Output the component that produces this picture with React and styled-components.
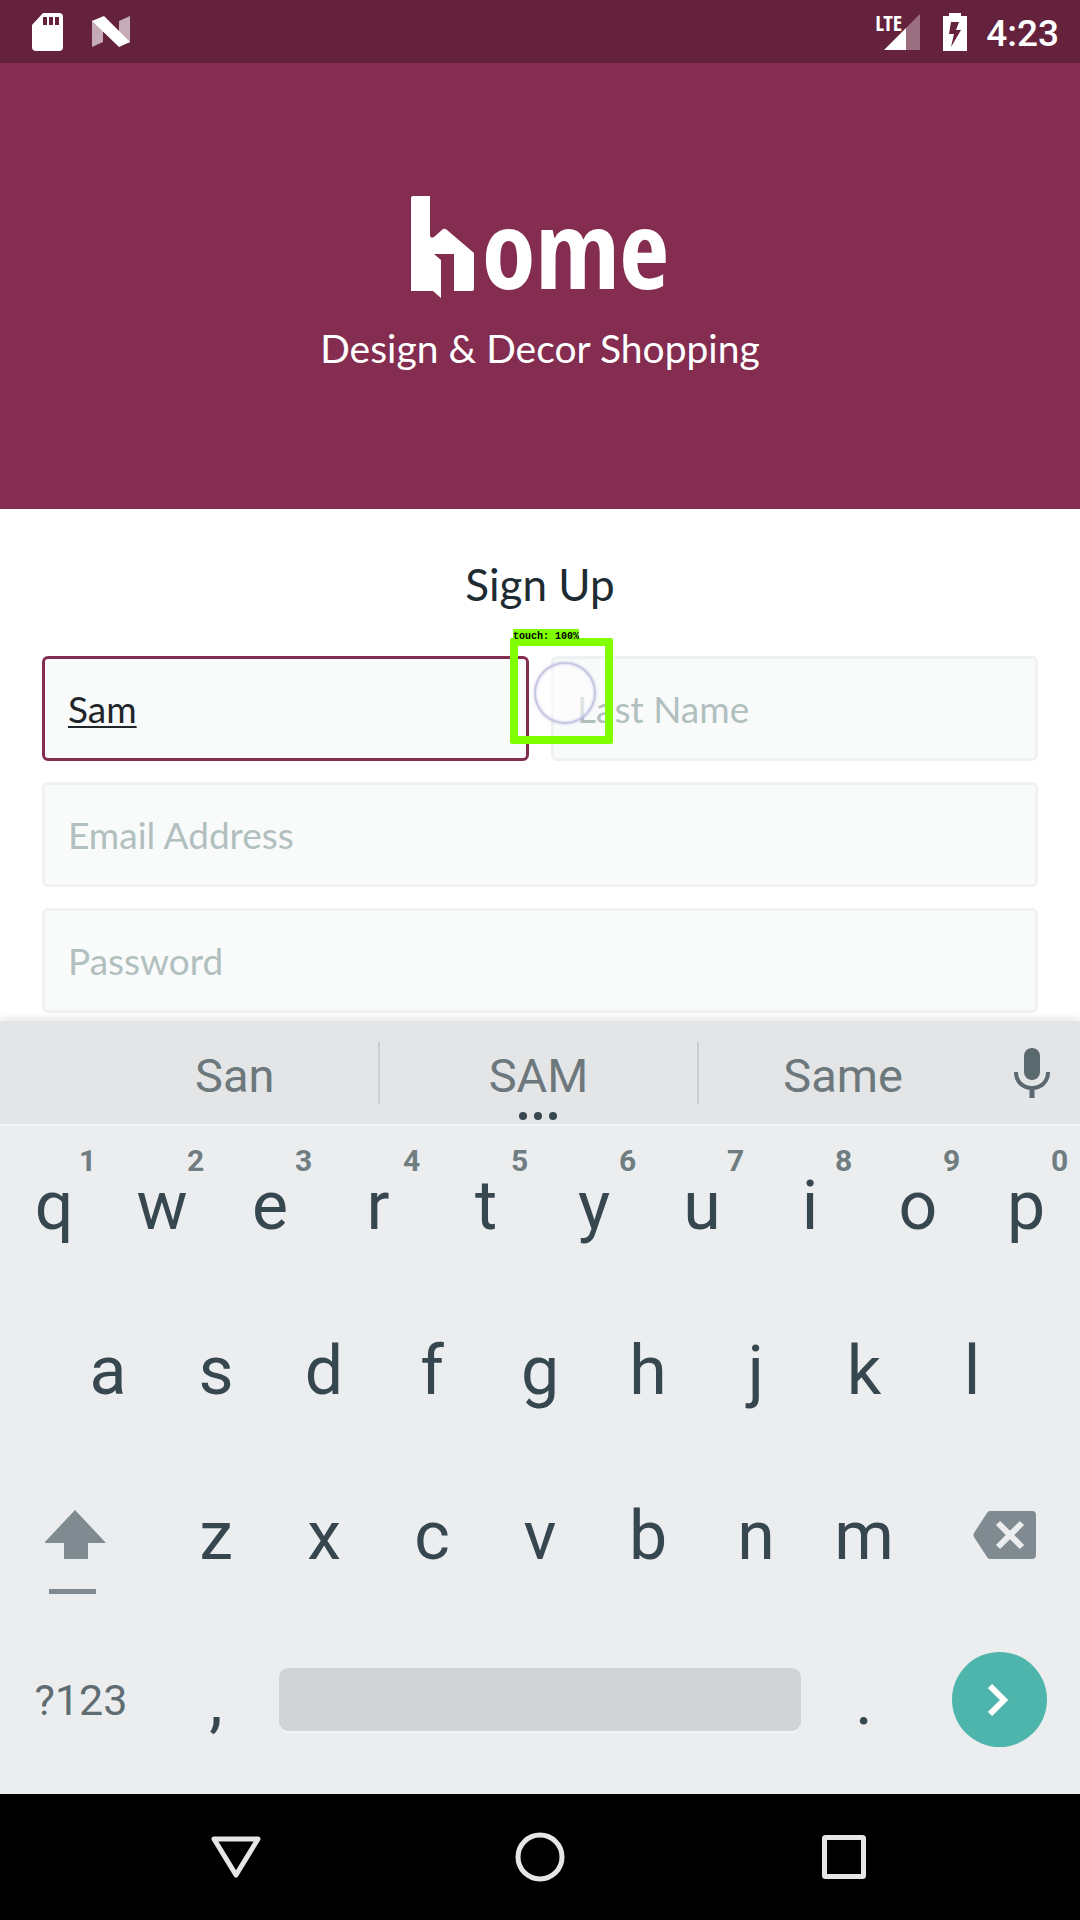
import React from "react";
import styled, { createGlobalStyle } from "styled-components";

const GlobalStyle = createGlobalStyle`
  *, *::before, *::after { box-sizing: border-box; }
  body { margin: 0; background: #ffffff; }
  button, input { font: inherit; margin: 0; }
  svg { display: block; flex: none; }
`;

const Screen = styled.div`
  display: flex;
  flex-direction: column;
  min-height: 100vh;
  font-family: Roboto, "Liberation Sans", sans-serif;
`;

const StatusBar = styled.header`
  display: flex;
  align-items: center;
  justify-content: space-between;
  height: 63px;
  padding: 0 21px 0 32px;
  background: #64223d;
  color: #ffffff;
`;

const StatusGroup = styled.div`
  display: flex;
  align-items: center;
  gap: ${(p) => p.$gap}px;
`;

const Network = styled.div`
  display: flex;
  align-items: flex-start;
  position: relative;
  padding: 0 4px 0 9px;
`;

const NetworkLabel = styled.span`
  position: absolute;
  left: 0;
  top: 0;
  font: 700 22px/16px "Open Sans Condensed", "Liberation Sans Narrow", Roboto, sans-serif;
`;

const Clock = styled.time`
  font-size: 37px;
  font-weight: 500;
  line-height: 40px;
  padding: 4px 0 0;
`;

const Hero = styled.section`
  display: flex;
  flex-direction: column;
  align-items: center;
  height: 446px;
  padding-top: 133px;
  background: #842d50;
  color: #ffffff;
`;

const Logo = styled.h1`
  display: flex;
  gap: 8px;
  height: 101px;
  margin: 0;
`;

const LogoText = styled.span`
  font: 700 108px/104px "Open Sans Condensed", "Liberation Sans Narrow", Roboto, sans-serif;
`;

const Tagline = styled.p`
  margin: 27px 0 0;
  font: 400 39px/48px Lato, "Open Sans", sans-serif;
`;

const SignUp = styled.form`
  flex: 1;
  padding: 47px 42px 0;
`;

const Title = styled.h2`
  margin: 0;
  font: 400 44px/56px Lato, "Open Sans", sans-serif;
  text-align: center;
  color: #1d2b33;
`;

const Fields = styled.div`
  display: grid;
  grid-template-columns: 1fr 1fr;
  gap: 21px 22px;
  margin-top: 44px;
`;

const FieldCell = styled.div`
  position: relative;
  grid-column: ${(p) => (p.$wide ? "1 / -1" : "auto")};
`;

const Field = styled.input`
  display: block;
  width: 100%;
  height: 105px;
  padding: 0 23px;
  border: 3px solid ${(p) => (p.$active ? "#842d50" : "#eff1f3")};
  border-radius: 6px;
  outline: none;
  background: #f9fbfb;
  color: #20262a;
  font: 400 37px/48px Lato, "Open Sans", sans-serif;
  text-decoration: ${(p) => (p.$active ? "underline 2px" : "none")};
  text-underline-offset: 3px;

  &::placeholder {
    color: #b1c0bf;
    opacity: 1;
  }
`;

const TouchMarker = styled.div`
  position: absolute;
  left: -41px;
  top: -18px;
  width: 103px;
  height: 106px;
  border: 8px solid #80ff00;
  border-radius: 2px;
  pointer-events: none;
`;

const TouchLabel = styled.span`
  position: absolute;
  left: -5px;
  top: -17px;
  padding: 1px 0 0;
  background: #80ff00;
  color: #000000;
  font: 700 10px/13px "Liberation Mono", monospace;
  white-space: nowrap;
`;

const TouchDot = styled.span`
  position: absolute;
  left: 16px;
  top: 16px;
  width: 62px;
  height: 62px;
  border: 2px solid rgba(170, 168, 212, 0.65);
  border-radius: 50%;
  background: rgba(253, 253, 255, 0.6);
  box-shadow: 0 0 3px rgba(170, 168, 212, 0.6), inset 0 0 3px rgba(170, 168, 212, 0.5);
`;

const Keyboard = styled.section`
  position: relative;
  background: #ecedef;
  box-shadow: 0 -4px 6px rgba(0, 0, 0, 0.08);
`;

const Suggestions = styled.div`
  display: grid;
  grid-template-columns: 9fr 10fr 9fr 93px;
  align-items: center;
  height: 105px;
  padding-left: 92px;
  border-bottom: 2px solid #f6f7f8;
  background: #e4e5e7;
`;

const Suggestion = styled.button`
  position: relative;
  height: 62px;
  padding: 6px 0 0;
  border: 0;
  border-right: ${(p) => (p.$last ? "0" : "2px solid #cbced1")};
  background: none;
  color: #6d787c;
  font-size: 47px;
  line-height: 56px;
`;

const MoreDots = styled.span`
  position: absolute;
  left: 50%;
  bottom: -16px;
  display: flex;
  gap: 7px;
  transform: translateX(-50%);

  &::before, &::after, i {
    content: "";
    width: 8px;
    height: 8px;
    border-radius: 50%;
    background: #37474f;
  }
`;

const IconButton = styled.button`
  display: flex;
  align-items: center;
  justify-content: center;
  height: 100%;
  grid-column: span ${(p) => p.$span || 1};
  padding: 0 0 ${(p) => (p.$span ? 8 : 0)}px;
  border: 0;
  background: none;
`;

const Keys = styled.div`
  display: grid;
  grid-template-columns: repeat(20, 1fr);
  grid-auto-rows: 165px;
  padding-bottom: 8px;
`;

const Key = styled.button`
  position: relative;
  grid-column: ${(p) => (p.$start ? `${p.$start} / ` : "")} span ${(p) => p.$span || 2};
  padding: 0 0 ${(p) => (p.$small ? 8 : 6)}px;
  border: 0;
  background: none;
  color: ${(p) => (p.$small ? "#5f6d73" : "#37474f")};
  font-size: ${(p) => (p.$small ? 43 : 68)}px;
  line-height: 80px;
`;

const Hint = styled.sup`
  position: absolute;
  left: 79px;
  top: 17px;
  color: #6f7c80;
  font-size: 30px;
  font-weight: 700;
  line-height: 36px;
`;

const SpaceKey = styled.button`
  grid-column: span 10;
  align-self: center;
  height: 63px;
  margin: 0 9px 8px;
  border: 0;
  border-radius: 9px;
  background: #d1d4d7;
  box-shadow: 0 2px 0 #f3f4f5;
`;

const EnterDisc = styled.span`
  display: flex;
  align-items: center;
  justify-content: center;
  width: 95px;
  height: 95px;
  border-radius: 50%;
  background: #4eb5ac;
`;

const NavBar = styled.nav`
  display: flex;
  align-items: center;
  justify-content: center;
  gap: 204px;
  height: 126px;
  background: #000000;
`;

const NavButton = styled.button`
  display: flex;
  justify-content: center;
  width: 100px;
  padding: 0;
  border: 0;
  background: none;
`;

const TOP_KEYS = "qwertyuiop".split("");
const HOME_KEYS = "asdfghjkl".split("");
const LOWER_KEYS = "zxcvbnm".split("");

const SdCardIcon = () => (
  <svg width="32" height="38" viewBox="0 0 32 38" aria-hidden="true">
    <path
      fill="#fff"
      fillRule="evenodd"
      d="M11 0H27Q31 0 31 4V34Q31 38 27 38H4Q0 38 0 34V12ZM11 4V12H15V4ZM17 4V12H21V4ZM23 4V12H27V4Z"
    />
  </svg>
);

const NougatIcon = () => (
  <svg width="38" height="31" viewBox="0 0 38 31" aria-hidden="true">
    <path fill="#fff" fillOpacity=".62" d="M0 4L11 15V26L0 31ZM27 5L38 0V27L27 16Z" />
    <path fill="#fff" d="M0 5L12 0L38 26L27 31Z" />
  </svg>
);

const SignalIcon = () => (
  <svg width="36" height="36" viewBox="0 0 36 36" aria-hidden="true">
    <path fill="#fff" fillOpacity=".35" d="M22 14L36 0V36H22Z" />
    <path fill="#fff" d="M0 36L22 14V36Z" />
  </svg>
);

const BatteryIcon = () => (
  <svg width="24" height="38" viewBox="0 0 24 38" aria-hidden="true">
    <path
      fill="#fff"
      fillRule="evenodd"
      d="M6 0H18V3H24V38H0V3H6ZM8 9L6 21H11L8 34L18 17H13L16 9Z"
    />
  </svg>
);

const HouseMark = () => (
  <svg width="63" height="102" viewBox="0 0 63 102" aria-hidden="true">
    <path
      fill="#fff"
      d="M2 0H19V40Q20 43 23 41L32 33Q34 32 36 34L63 57V93Q63 95 61 95H43V58H23L30 64V102L22 95H0V2Q0 0 2 0Z"
    />
  </svg>
);

const MicIcon = () => (
  <svg width="38" height="50" viewBox="0 0 38 50" aria-hidden="true">
    <rect x="10" y="0" width="16" height="32" rx="8" fill="#5a686f" />
    <path d="M2 24C2 34 9 40 18 40S34 34 34 24" fill="none" stroke="#5a686f" strokeWidth="4" />
    <path d="M18 40V50" stroke="#5a686f" strokeWidth="5" />
  </svg>
);

const ShiftIcon = () => (
  <svg width="72" height="121" viewBox="0 0 72 121" aria-hidden="true">
    <path fill="#7f8b90" d="M30 36L61 69H43V85H19V69H-1Z" />
    <path fill="#7f8b90" d="M4 115H51V120H4Z" />
  </svg>
);

const BackspaceIcon = () => (
  <svg width="74" height="48" viewBox="0 0 74 48" aria-hidden="true">
    <path
      fill="#7f8b90"
      d="M28 0H70Q74 0 74 4V44Q74 48 70 48H28Q26 48 25 46L12 26Q11 24 12 22L25 2Q26 0 28 0Z"
    />
    <path d="M36 12L60 36M60 12L36 36" stroke="#ecedef" strokeWidth="6" />
  </svg>
);

const ChevronIcon = () => (
  <svg width="22" height="32" viewBox="0 0 22 32" aria-hidden="true">
    <path d="M2 2L16 16L2 30" fill="none" stroke="#fff" strokeWidth="6" />
  </svg>
);

const BackIcon = () => (
  <svg width="50" height="44" viewBox="0 0 50 44" aria-hidden="true">
    <path d="M3 4H47L25 40Z" fill="none" stroke="#e6e6e6" strokeWidth="5" strokeLinejoin="round" />
  </svg>
);

const HomeIcon = () => (
  <svg width="50" height="50" viewBox="0 0 50 50" aria-hidden="true">
    <circle cx="25" cy="25" r="22" fill="none" stroke="#e6e6e6" strokeWidth="5" />
  </svg>
);

const RecentsIcon = () => (
  <svg width="44" height="44" viewBox="0 0 44 44" aria-hidden="true">
    <rect x="2.5" y="2.5" width="39" height="39" rx="1" fill="none" stroke="#e6e6e6" strokeWidth="5" />
  </svg>
);

export default function App() {
  return (
    <Screen>
      <GlobalStyle />
      <StatusBar>
        <StatusGroup $gap={28}>
          <SdCardIcon />
          <NougatIcon />
        </StatusGroup>
        <StatusGroup $gap={19}>
          <Network>
            <NetworkLabel>LTE</NetworkLabel>
            <SignalIcon />
          </Network>
          <BatteryIcon />
          <Clock>4:23</Clock>
        </StatusGroup>
      </StatusBar>

      <Hero>
        <Logo aria-label="home">
          <HouseMark />
          <LogoText>ome</LogoText>
        </Logo>
        <Tagline>Design &amp; Decor Shopping</Tagline>
      </Hero>

      <SignUp onSubmit={(e) => e.preventDefault()}>
        <Title>Sign Up</Title>
        <Fields>
          <FieldCell>
            <Field $active type="text" aria-label="First Name" defaultValue="Sam" />
          </FieldCell>
          <FieldCell>
            <Field type="text" aria-label="Last Name" placeholder="Last Name" />
            <TouchMarker>
              <TouchDot />
              <TouchLabel>touch: 100%</TouchLabel>
            </TouchMarker>
          </FieldCell>
          <FieldCell $wide>
            <Field type="email" aria-label="Email Address" placeholder="Email Address" />
          </FieldCell>
          <FieldCell $wide>
            <Field type="password" aria-label="Password" placeholder="Password" />
          </FieldCell>
        </Fields>
      </SignUp>

      <Keyboard>
        <Suggestions>
          <Suggestion type="button">San</Suggestion>
          <Suggestion type="button">
            SAM
            <MoreDots>
              <i />
            </MoreDots>
          </Suggestion>
          <Suggestion type="button" $last>Same</Suggestion>
          <IconButton type="button" aria-label="Voice input">
            <MicIcon />
          </IconButton>
        </Suggestions>
        <Keys>
          {TOP_KEYS.map((letter, i) => (
            <Key type="button" key={letter}>
              {letter}
              <Hint>{(i + 1) % 10}</Hint>
            </Key>
          ))}
          {HOME_KEYS.map((letter, i) => (
            <Key type="button" key={letter} $start={i === 0 ? 2 : undefined}>
              {letter}
            </Key>
          ))}
          <IconButton type="button" $span={3} aria-label="Shift">
            <ShiftIcon />
          </IconButton>
          {LOWER_KEYS.map((letter) => (
            <Key type="button" key={letter}>{letter}</Key>
          ))}
          <IconButton type="button" $span={3} aria-label="Backspace">
            <BackspaceIcon />
          </IconButton>
          <Key type="button" $span={3} $small>?123</Key>
          <Key type="button">,</Key>
          <SpaceKey type="button" aria-label="Space" />
          <Key type="button">.</Key>
          <IconButton type="button" $span={3} aria-label="Next">
            <EnterDisc>
              <ChevronIcon />
            </EnterDisc>
          </IconButton>
        </Keys>
      </Keyboard>

      <NavBar>
        <NavButton type="button" aria-label="Back"><BackIcon /></NavButton>
        <NavButton type="button" aria-label="Home"><HomeIcon /></NavButton>
        <NavButton type="button" aria-label="Recents"><RecentsIcon /></NavButton>
      </NavBar>
    </Screen>
  );
}
